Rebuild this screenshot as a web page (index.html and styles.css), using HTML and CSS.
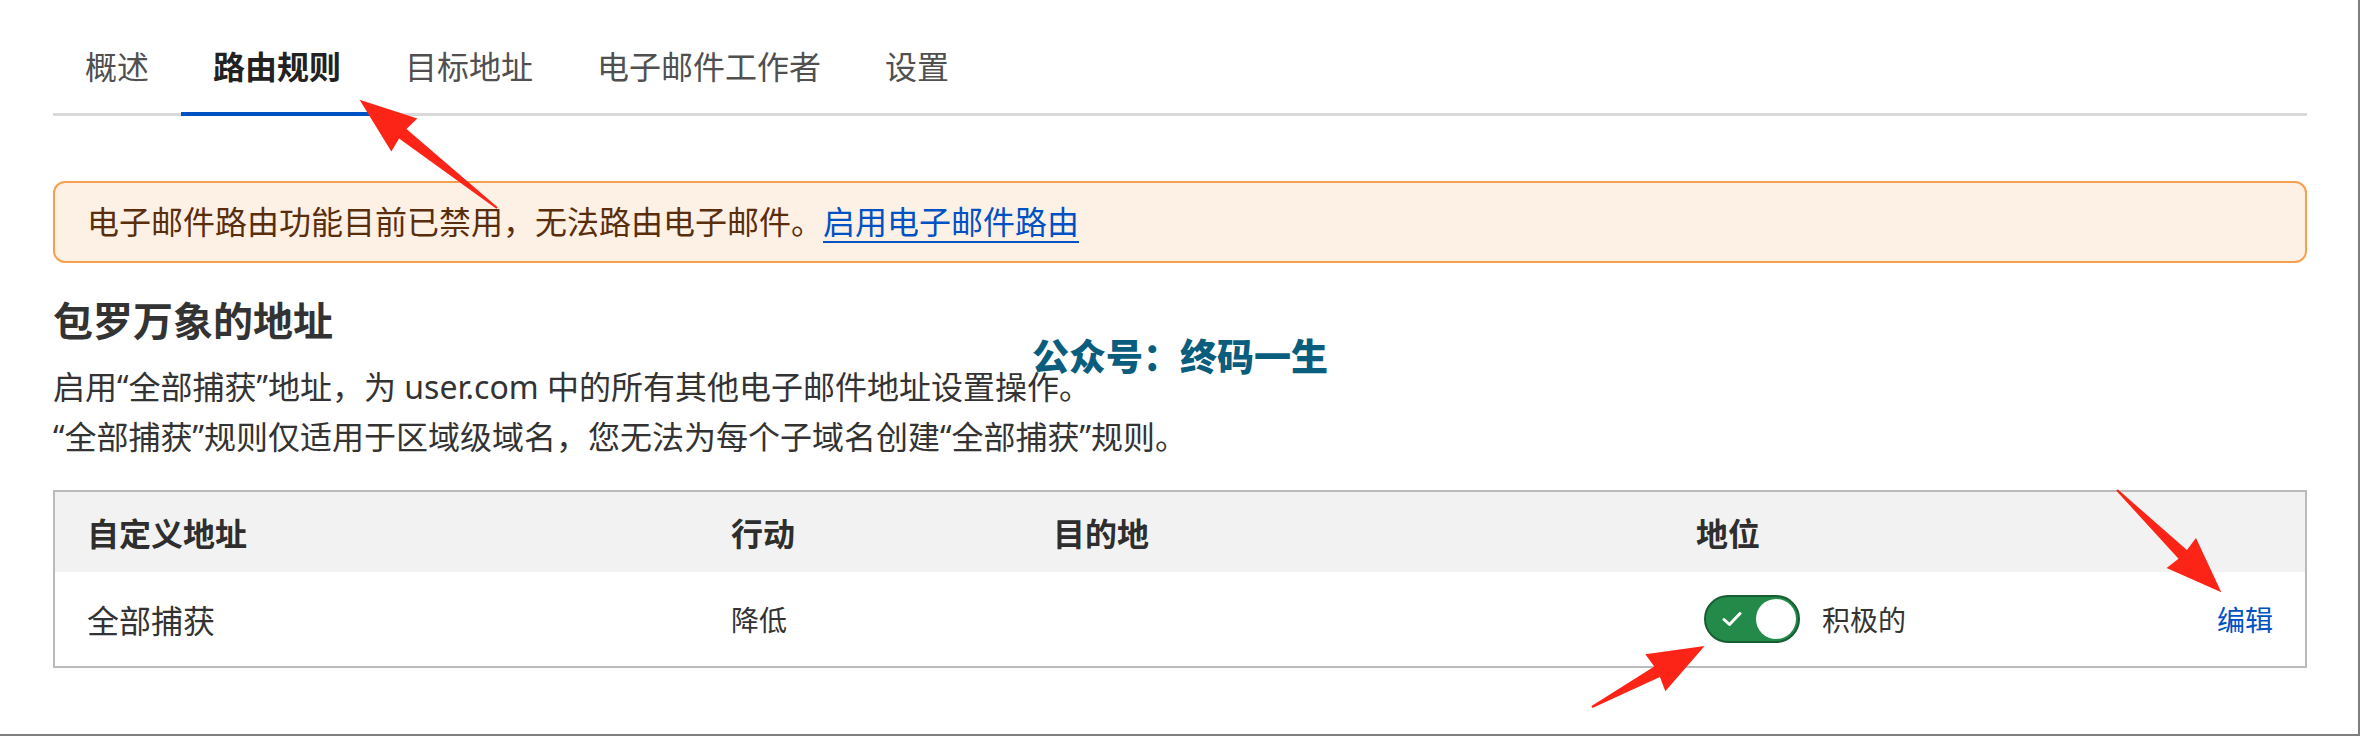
FILE: index.html
```html
<!DOCTYPE html>
<html>
<head>
    <meta charset="UTF-8">
    <title>路由规则</title>
    <link rel="stylesheet" href="styles.css">
</head>
<body>
    <div class="page">
        <ul class="tabs">
            <li class="tab">概述</li>
            <li class="tab active">路由规则</li>
            <li class="tab">目标地址</li>
            <li class="tab">电子邮件工作者</li>
            <li class="tab">设置</li>
        </ul>

        <div class="notice">
            电子邮件路由功能目前已禁用，无法路由电子邮件。<a href="#">启用电子邮件路由</a>
        </div>

        <h2 class="section-title">包罗万象的地址</h2>
        <p class="desc">启用“全部捕获”地址，为 user.com 中的所有其他电子邮件地址设置操作。</p>
        <p class="desc">“全部捕获”规则仅适用于区域级域名，您无法为每个子域名创建“全部捕获”规则。</p>

        <div class="rules">
            <div class="rules-head">
                <div>自定义地址</div>
                <div>行动</div>
                <div>目的地</div>
                <div>地位</div>
                <div></div>
            </div>
            <div class="rules-row">
                <div>全部捕获</div>
                <div class="small">降低</div>
                <div></div>
                <div class="status">
                    <span class="toggle">
                        <svg class="check" width="20" height="16" viewBox="0 0 20 16">
                            <path d="M2 8.5 L7.5 13.5 L18 2.5" fill="none" stroke="#fff" stroke-width="3" stroke-linecap="round" stroke-linejoin="round"/>
                        </svg>
                        <span class="knob"></span>
                    </span>
                    <span class="small status-text">积极的</span>
                </div>
                <a class="edit small" href="#">编辑</a>
            </div>
        </div>

        <!-- 水印 -->
        <div class="watermark">公众号：终码一生</div>

        <!-- 标注箭头 -->
        <svg class="marks" width="2360" height="740" viewBox="0 0 2360 740">
            <g fill="#fb2417">
                <polygon transform="translate(497 208) rotate(-141.75)" points="0,-1 120,-6 118,-21 175,0 118,21 120,6 0,1"/>
                <polygon transform="translate(1592 707) rotate(-28.4)" points="0,-1 74,-6 72,-21 128,0 72,21 74,6 0,1"/>
                <polygon transform="translate(2117 490) rotate(44.4)" points="0,-1 92,-6 90,-21 146,0 90,21 92,6 0,1"/>
            </g>
        </svg>
    </div>
</body>
</html>
```

FILE: styles.css
```css
* {
    box-sizing: border-box;
}

body {
    margin: 0;
    background: #fff;
}

.page {
    position: relative;
    width: 2360px;
    height: 736px;
    padding: 43px 51px 0 53px;
    border-right: 2px solid #7f7f7f;
    border-bottom: 2px solid #7f7f7f;
    font-family: "Noto Sans", "Noto Sans CJK SC", sans-serif;
    color: #333;
}

/* 顶部标签 */
.tabs {
    display: flex;
    margin: 0;
    padding: 0;
    list-style: none;
    border-bottom: 3px solid #d9d9d9;
}

.tab {
    padding: 0 32px 21px;
    font-size: 32px;
    line-height: 48px;
    color: #505050;
    border-bottom: 4px solid transparent;
    margin-bottom: -3px;
}

.tab.active {
    color: #222;
    font-weight: 700;
    border-bottom-color: #0051c3;
}

/* 提示条 */
.notice {
    margin-top: 65px;
    padding: 15px 32px;
    border: 2px solid #f6a04d;
    border-radius: 12px;
    background: #fdf0e4;
    font-size: 32px;
    line-height: 48px;
    color: #5a2e0c;
}

.notice a {
    color: #0051c3;
    text-decoration: underline;
    text-decoration-thickness: 2px;
    text-underline-offset: 7px;
}

.section-title {
    margin: 30px 0 13px;
    font-size: 40px;
    line-height: 56px;
    font-weight: 700;
    color: #333;
}

.desc {
    margin: 0;
    font-size: 32px;
    line-height: 50px;
    color: #333;
}

/* 规则表格 */
.rules {
    margin-top: 28px;
    border: 2px solid #bababa;
}

.rules-head,
.rules-row {
    display: grid;
    grid-template-columns: 644px 322px 643px 1fr auto;
    align-items: center;
    padding: 0 32px;
    font-size: 32px;
}

.rules-head {
    height: 80px;
    background: #f2f2f2;
    font-weight: 600;
    color: #2e2e2e;
}

.rules-row {
    height: 94px;
    color: #333;
}

.small {
    font-size: 28px;
}

.status {
    display: flex;
    align-items: center;
}

.toggle {
    display: flex;
    align-items: center;
    justify-content: space-between;
    width: 96px;
    height: 48px;
    margin-left: 8px;
    padding: 0 2px 0 16px;
    border: 2px solid #175c32;
    border-radius: 24px;
    background: #238a4a;
}

.knob {
    width: 40px;
    height: 40px;
    border-radius: 50%;
    background: #fff;
}

.status-text {
    margin-left: 22px;
}

.edit {
    color: #0051c3;
    text-decoration: none;
}

.watermark {
    position: absolute;
    left: 1032px;
    top: 330px;
    font-family: "Noto Sans CJK SC", sans-serif;
    font-size: 37px;
    line-height: 50px;
    font-weight: 900;
    color: #0b5d7e;
}

.marks {
    position: absolute;
    left: 0;
    top: 0;
    pointer-events: none;
}
```
